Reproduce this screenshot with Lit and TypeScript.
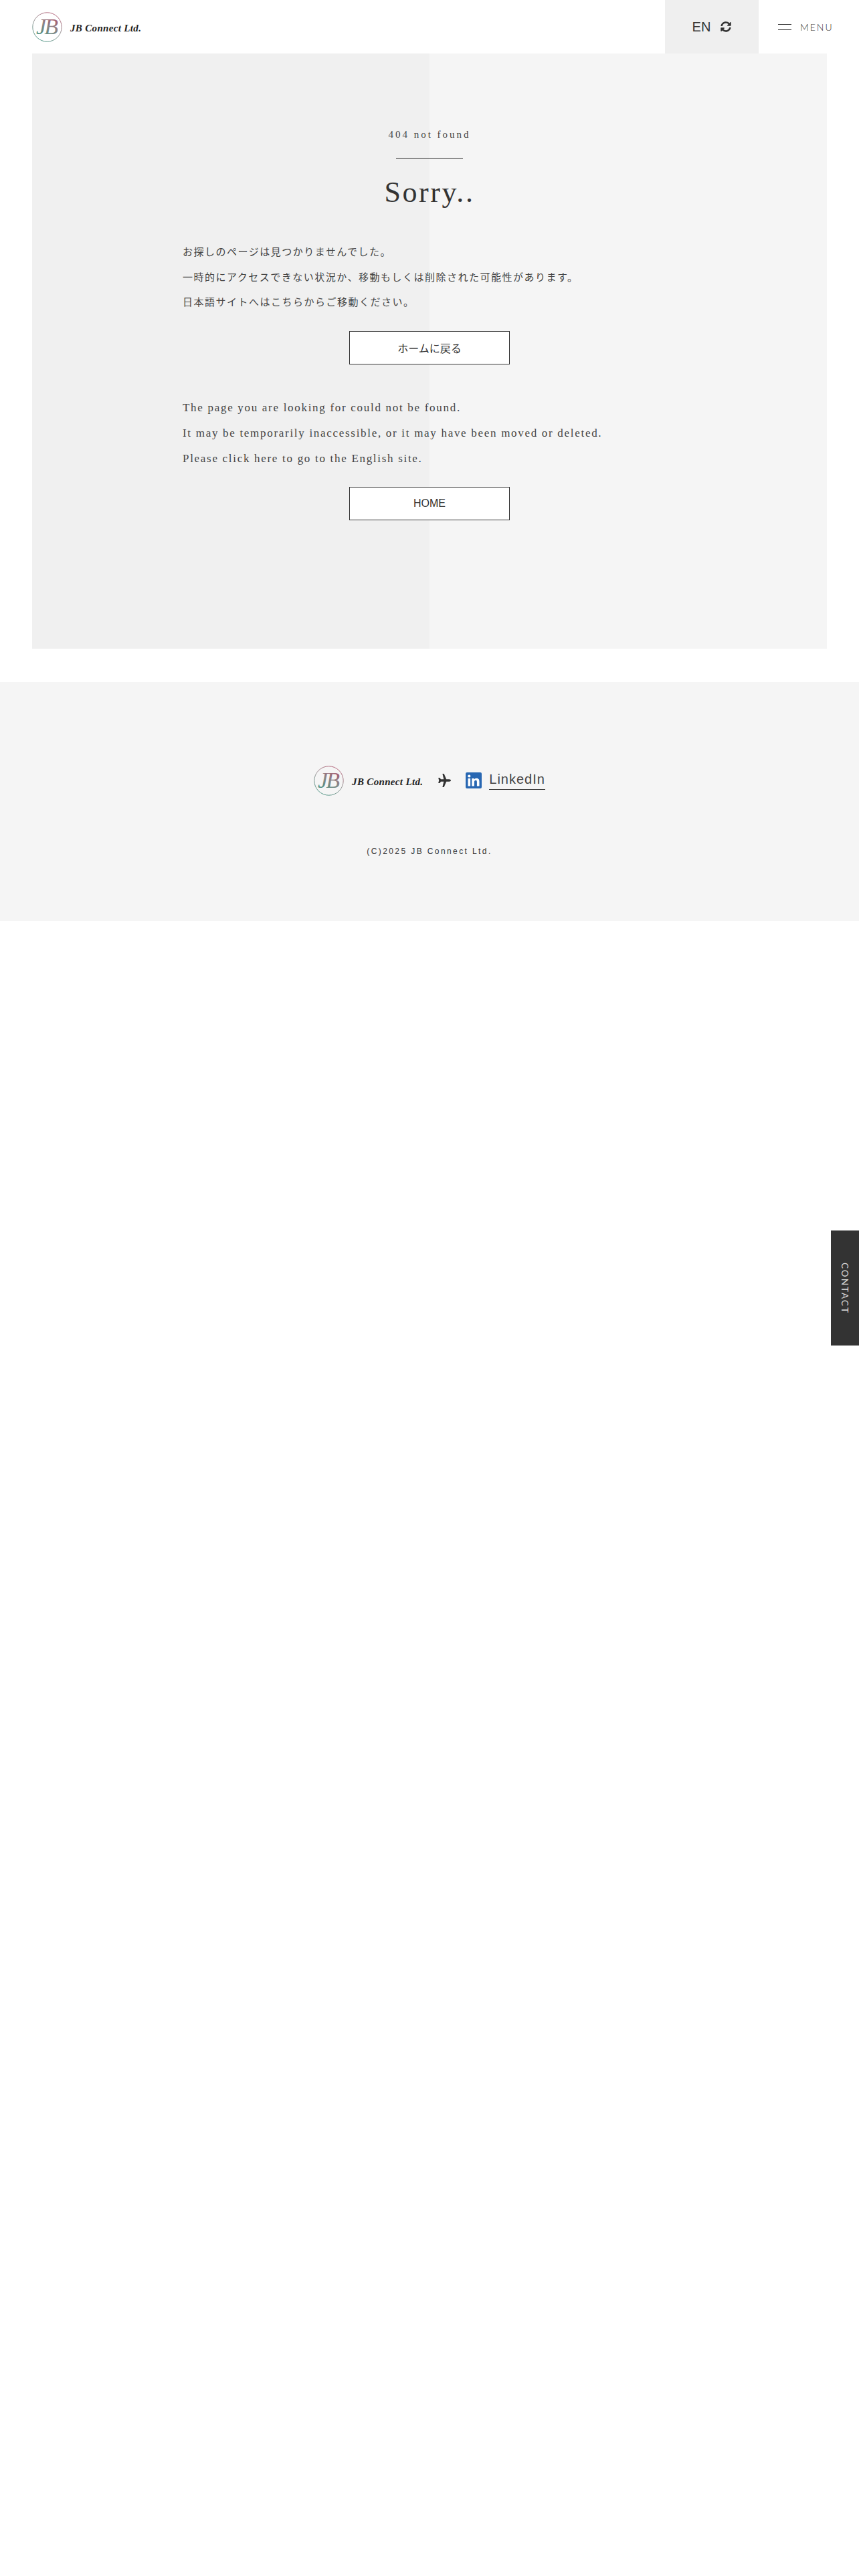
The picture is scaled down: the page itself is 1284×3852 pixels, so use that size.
import { LitElement, html, css, svg } from "lit";
import { customElement } from "lit/decorators.js";

let uid = 0;
const logo = () => {
  const id = `g${uid++}`;
  return svg`<svg class="mark" viewBox="0 0 45 45" width="45" height="45">
    <defs><linearGradient id=${id} x1="0.75" y1="0" x2="0.25" y2="1">
      <stop offset="0" stop-color="#b0526c"/><stop offset="0.5" stop-color="#888"/><stop offset="1" stop-color="#3f8f7c"/>
    </linearGradient></defs>
    <circle cx="22.5" cy="22.5" r="21.7" fill="none" stroke=${`url(#${id})`} stroke-width="0.9"/>
    <text x="21" y="33" text-anchor="middle" fill=${`url(#${id})`} font-family="Liberation Serif" font-style="italic" font-size="34" letter-spacing="-3">JB</text>
  </svg>`;
};

@customElement("app-root")
export class AppRoot extends LitElement {
  static styles = css`
    :host { display: block; position: relative; width: 1284px; height: 3852px; background: #fff; color: #333; font-family: "Liberation Serif", "Noto Sans CJK JP", serif; }
    .header { height: 80px; display: flex; align-items: center; }
    .brand { display: flex; align-items: center; gap: 12px; margin-left: 48px; }
    .brand.in-footer { margin-left: 0; }
    .mark { display: block; flex: none; }
    .wordmark { font-family: "Liberation Serif", serif; font-style: italic; font-weight: 700; color: #222; white-space: nowrap; font-size: 15px; letter-spacing: 0.33px; position: relative; top: 2px; }
    .lang { margin-left: auto; width: 140px; height: 80px; background: #efefef; display: flex; align-items: center; justify-content: center; gap: 15px; font: 20px "Liberation Sans", sans-serif; color: #333; }
    .menu { width: 150px; display: flex; align-items: center; padding-left: 29px; box-sizing: border-box; gap: 13px; font: 300 14px Lato, sans-serif; letter-spacing: 2px; color: #333; }
    .burger { width: 20px; height: 7px; border-top: 1px solid #333; border-bottom: 1px solid #333; }
    .main { margin: 0 48px; height: 890px; background: linear-gradient(to right, #f0f0f0 50%, #f5f5f5 50%); box-sizing: border-box; padding-top: 111px; display: flex; flex-direction: column; align-items: center; }
    .sub { font-size: 15px; letter-spacing: 3px; line-height: 20px; color: #444; }
    .rule { width: 100px; height: 1px; background: #222; margin: 25px 0 0; }
    h1 { margin: 26px 0 0; font-weight: 400; font-size: 44px; line-height: 50px; letter-spacing: 2.6px; color: #333; }
    .copy { width: 738px; font-size: 15px; line-height: 37.6px; letter-spacing: 1.5px; color: #444; }
    .copy.jp { margin-top: 46px; }
    .copy.en { margin-top: 46px; font-size: 17px; letter-spacing: 1.7px; line-height: 38px; }
    .copy p { margin: 0; white-space: nowrap; }
    .btn { width: 240px; height: 50px; box-sizing: border-box; margin-top: 23px; background: #fff; border: 1px solid #333; display: flex; align-items: center; justify-content: center; font: 16px "Liberation Sans", "Noto Sans CJK JP", sans-serif; color: #333; }
    .footer { margin-top: 50px; height: 357px; background: #f5f5f5; box-sizing: border-box; padding-top: 124px; display: flex; flex-direction: column; align-items: center; }
    .frow { display: flex; align-items: center; height: 46px; }
    .plane { margin-left: 22px; display: block; }
    .li { margin-left: 22px; display: block; }
    .lilink { margin-left: 11px; font: 20px "Liberation Sans", sans-serif; letter-spacing: 1px; padding-bottom: 3px; border-bottom: 1px solid #333; line-height: 24px; color: #444; }
    .cr { margin-top: 75px; font: 12px "Liberation Sans", sans-serif; letter-spacing: 2.4px; color: #333; line-height: 16px; }
    .contact { position: absolute; right: 0; top: 1840px; width: 42px; height: 172px; background: #333; color: #ddd; display: flex; align-items: center; justify-content: center; writing-mode: vertical-rl; font: 13.5px Lato, sans-serif; letter-spacing: 2px; }
  `;
  render() {
    return html`
      <header class="header">
        <div class="brand">${logo()}<span class="wordmark">JB Connect Ltd.</span></div>
        <div class="lang"><span>EN</span>
          <svg width="16" height="16" viewBox="0 0 512 512" fill="#333"><path d="M370.7 133.3C339.5 104 298.9 88 255.8 88c-77.5.1-144.3 53.2-162.8 126.9-1.3 5.4-6.1 9.2-11.7 9.2H24.100c-7.500 0-13.200-6.800-11.800-14.200C33.900 94.900 134.800 8 256 8c66.400 0 126.800 26.100 171.300 68.700L463 41c15.100-15.100 41-4.400 41 17v134c0 13.300-10.700 24-24 24H346c-21.400 0-32.100-25.900-17-41l41.700-41.700zM32 296h134c21.400 0 32.100 25.900 17 41l-41.700 41.700c31.200 29.300 71.800 45.300 114.900 45.300 77.400-.1 144.300-53.100 162.800-126.800 1.300-5.400 6.100-9.200 11.700-9.200h57.300c7.500 0 13.200 6.800 11.800 14.200C478.100 417.100 377.200 504 256 504c-66.400 0-126.800-26.100-171.300-68.700L49 471c-15.100 15.100-41 4.400-41-17V320c0-13.300 10.700-24 24-24z"/></svg>
        </div>
        <div class="menu"><span class="burger"></span><span>MENU</span></div>
      </header>
      <main class="main">
        <div class="sub">404 not found</div>
        <div class="rule"></div>
        <h1>Sorry..</h1>
        <div class="copy jp">
          <p>お探しのページは見つかりませんでした。</p>
          <p>一時的にアクセスできない状況か、移動もしくは削除された可能性があります。</p>
          <p>日本語サイトへはこちらからご移動ください。</p>
        </div>
        <div class="btn">ホームに戻る</div>
        <div class="copy en">
          <p>The page you are looking for could not be found.</p>
          <p>It may be temporarily inaccessible, or it may have been moved or deleted.</p>
          <p>Please click here to go to the English site.</p>
        </div>
        <div class="btn">HOME</div>
      </main>
      <footer class="footer">
        <div class="frow">
          <div class="brand in-footer">${logo()}<span class="wordmark">JB Connect Ltd.</span></div>
          <svg class="plane" width="20" height="20" viewBox="0 0 20 20" fill="#333"><path d="M20 10c0 1-1.400 1.700-2.500 1.700h-4.300L9.700 20H7.400l1.900-8.300H5l-1.600 2.300H1.200L2.200 10 1.200 6h2.200L5 8.300h4.300L7.400 0h2.300l3.500 8.300h4.300C18.600 8.300 20 9 20 10z"/></svg>
          <svg class="li" width="24" height="24" viewBox="0 0 24 24"><rect width="24" height="24" rx="2" fill="#2867b2"/><rect x="3.500" y="9" width="3.600" height="11.500" fill="#fff"/><circle cx="5.300" cy="5.500" r="2.100" fill="#fff"/><path fill="#fff" d="M9.300 9h3.400v1.600c.6-1 1.800-1.900 3.500-1.900 3.500 0 4.300 2.300 4.300 5.300v6.500h-3.600v-5.700c0-1.400 0-3-1.800-3s-2.200 1.400-2.200 2.900v5.800H9.300z"/></svg>
          <span class="lilink">LinkedIn</span>
        </div>
        <div class="cr">(C)2025 JB Connect Ltd.</div>
      </footer>
      <div class="contact">CONTACT</div>
    `;
  }
}
